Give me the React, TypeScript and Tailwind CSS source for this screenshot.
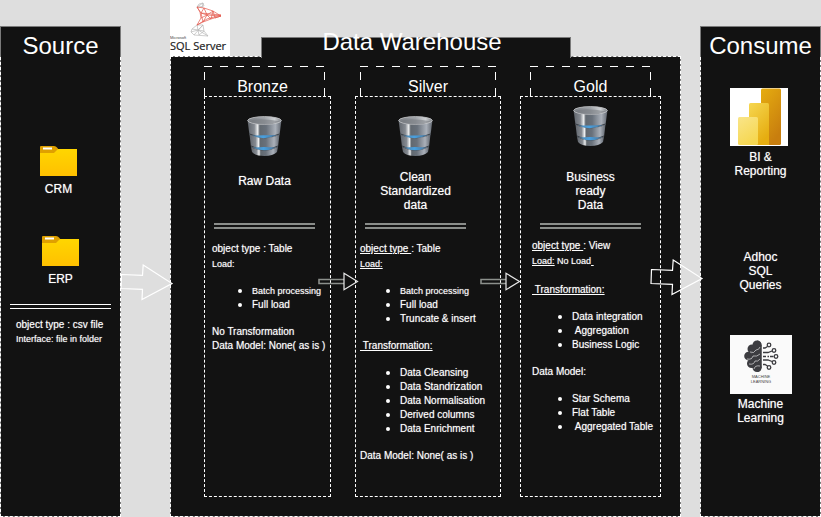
import { useId, type ReactNode } from "react";

const panelFill =
  "border-dashed border-white [background:linear-gradient(#121212,#121212)_padding-box,linear-gradient(#7a7a7a,#7a7a7a)_border-box]";

const longDashTab =
  "[background:repeating-linear-gradient(90deg,#fff_0_8px,transparent_8px_16px)_top/100%_1px_no-repeat,repeating-linear-gradient(0deg,#fff_0_8px,transparent_8px_16px)_left/1px_100%_no-repeat,repeating-linear-gradient(0deg,#fff_0_8px,transparent_8px_16px)_right/1px_100%_no-repeat]";

const strongText = "[text-shadow:0_0_1px_#ffffff99]";

function FolderIcon() {
  const id = useId();
  return (
    <svg viewBox="0 0 37 30" className="block h-[30px] w-[37px]" aria-hidden="true">
      <defs>
        <linearGradient id={id} x1="0" y1="0" x2="0" y2="1">
          <stop offset="0" stopColor="#ffd600" />
          <stop offset="1" stopColor="#ffc000" />
        </linearGradient>
      </defs>
      <path d="M0 1Q0 0 1 0H14Q16 0 17 1.500L19 4V7H0Z" fill="#dfa000" />
      <rect x="3" y="1.500" width="9" height="2" fill="#fff" />
      <path d="M0 7H14L18 3H37V30H0Z" fill={`url(#${id})`} />
    </svg>
  );
}

function DatabaseIcon() {
  const id = useId();
  const metal = `url(#${id}m)`;
  const glow = `url(#${id}b)`;
  return (
    <svg viewBox="0 0 35 40" className="block h-10 w-[35px]" aria-hidden="true">
      <defs>
        <linearGradient id={`${id}m`}>
          <stop offset="0" stopColor="#60656c" />
          <stop offset="0.2" stopColor="#858a91" />
          <stop offset="0.3" stopColor="#eceeef" />
          <stop offset="0.36" stopColor="#626970" />
          <stop offset="0.55" stopColor="#69717b" />
          <stop offset="0.82" stopColor="#aab0b9" />
          <stop offset="1" stopColor="#60666f" />
        </linearGradient>
        <linearGradient id={`${id}t`}>
          <stop offset="0" stopColor="#7d8186" />
          <stop offset="0.5" stopColor="#9ea2a7" />
          <stop offset="0.8" stopColor="#cdd0d3" />
          <stop offset="1" stopColor="#7c8085" />
        </linearGradient>
        <linearGradient id={`${id}b`}>
          <stop offset="0" stopColor="#5484a8" />
          <stop offset="0.45" stopColor="#48a0e0" />
          <stop offset="1" stopColor="#4c7396" />
        </linearGradient>
      </defs>
      <path d="M0.500 4L2.500 19Q17 26 32.500 19L34.500 4Z" fill={metal} />
      <path d="M2.500 18.500Q17 26 32.500 18.500L31 31Q17 38 4 31Z" fill={metal} />
      <path d="M4 31Q17 38 31 31L30 36Q26 40 17.500 40Q8 40 5 36Z" fill={metal} />
      <path d="M2.500 18Q17 24.500 32.500 18" fill="none" stroke="#30373e" strokeWidth="0.900" />
      <path d="M4 30Q17 37 31 30" fill="none" stroke="#30373e" strokeWidth="0.900" />
      <path d="M5 19.500Q17 19.500 30 19Q17 25 5 19.500Z" fill={glow} />
      <path d="M6 31.500Q17 30.500 29 31.500Q17 37 6 31.500Z" fill={glow} />
      <ellipse cx="17.500" cy="4.500" rx="16.800" ry="3.900" fill={`url(#${id}t)`} stroke="#c6c8ca" strokeWidth="0.800" />
      <path d="M2 5.500Q10 1 33 5.500Q25 9 17 8.400Q8 8.500 2 5.500Z" fill="#6f747a" opacity="0.5" />
    </svg>
  );
}

function SqlServerLogo() {
  return (
    <div className="h-14 w-[60px] bg-white">
      <svg viewBox="0 0 60 56" className="block h-14 w-[60px]" role="img" aria-label="Microsoft SQL Server">
        <g fill="none" stroke="#b9b9b9" strokeWidth="0.700">
          <path d="M27 7L29 4L33 3L34 6L29 7L27 7L33 3L32 8" />
          <path d="M27 25L22 29L21 32L24 35L38 36L34 31L33 25L27 25L28 30L38 36M22 29L28 30L33 25L24 35M21 32L28 30L34 31L29 35L28 30" />
        </g>
        <g fill="none" stroke="#e4574c" strokeWidth="0.700">
          <path d="M27 7L34 8L43 11L51 16L41 19L33 22L27 25L31 18L30 12Z" />
          <path d="M27 7L31 13L34 8L37 15L43 11L45 18L51 16L37 15L31 13L33 22L37 15L41 19L43 11M31 18L37 15M27 25L37 19L51 15L31 13" />
        </g>
        <text x="0" y="39" fontSize="4" fill="#444" fontFamily="Liberation Sans, sans-serif">Microsoft</text>
        <text x="0" y="50" fontSize="11" fill="#222" stroke="#222" strokeWidth="0.200" fontFamily="Open Sans, sans-serif">SQL Server</text>
      </svg>
    </div>
  );
}

function PowerBiIcon() {
  const id = useId();
  return (
    <svg viewBox="0 0 58 58" className="mr-[3px] block h-[58px] w-[58px] bg-white" role="img" aria-label="Power BI">
      <defs>
        <linearGradient id={`${id}a`} x1="0" y1="0" x2="0.5" y2="1">
          <stop offset="0" stopColor="#e6ad10" />
          <stop offset="1" stopColor="#c87e0e" />
        </linearGradient>
        <linearGradient id={`${id}b`} x1="0" y1="0" x2="0.5" y2="1">
          <stop offset="0" stopColor="#f6d751" />
          <stop offset="1" stopColor="#e6ad10" />
        </linearGradient>
        <linearGradient id={`${id}c`} x1="0" y1="0" x2="0.5" y2="1">
          <stop offset="0" stopColor="#f9e589" />
          <stop offset="1" stopColor="#f6d751" />
        </linearGradient>
      </defs>
      <rect x="31" y="0.500" width="20" height="56.500" rx="1.500" fill={`url(#${id}a)`} />
      <path d="M19 16.500Q19 15 20.500 15H37.500Q39 15 39 16.500V57H19Z" fill={`url(#${id}b)`} />
      <rect x="8" y="29" width="20" height="28" rx="1.500" fill={`url(#${id}c)`} />
    </svg>
  );
}

function MachineLearningIcon() {
  return (
    <svg viewBox="0 0 62 59" className="block h-[59px] w-[62px] bg-[#fafafa]" role="img" aria-label="Machine learning">
      <g fill="#3c3c40">
        <circle cx="27" cy="10" r="4.500" />
        <circle cx="22" cy="14" r="4.500" />
        <circle cx="18.500" cy="21" r="4.300" />
        <circle cx="21.500" cy="28.500" r="4.500" />
        <circle cx="27" cy="32.500" r="4.500" />
        <rect x="22" y="10" width="9.500" height="23" />
        <path d="M27 5.500Q31.500 6 31.500 10V33Q31 37 27 37Z" />
      </g>
      <g fill="none" stroke="#fafafa" strokeWidth="0.600">
        <path d="M20 17Q24 19 26 15Q29 15 30 12M17 24Q22 25 23 21Q27 22 30 19M19 29Q24 30 25 26Q28 27 30 24M24 34Q25 30 30 31" />
      </g>
      <g fill="none" stroke="#3c3c40" strokeWidth="1.300">
        <path d="M33 13H35L37.500 11.500M33 17.500H38L42 16M33 21.500H36M37.500 21.500H39M40 21.500H43.500M33 25H38L42 26.500M33 29.500H35L37.500 31" />
        <circle cx="39" cy="10" r="1.800" />
        <circle cx="44" cy="15.500" r="1.800" />
        <circle cx="46" cy="21.500" r="1.800" />
        <circle cx="44" cy="27.500" r="1.800" />
        <circle cx="39" cy="32.500" r="1.800" />
      </g>
      <g fontSize="4" fill="#444" textAnchor="middle" fontFamily="Liberation Sans, sans-serif">
        <text x="31" y="43">MACHINE</text>
        <text x="31" y="48">LEARNING</text>
      </g>
    </svg>
  );
}

function BigArrow({ className }: { className: string }) {
  return (
    <svg viewBox="0 0 53 37" className={`h-[37px] w-[53px] ${className}`} aria-hidden="true">
      <path d="M1.500 10.500L22.500 11.300L23.200 1L52 19.500L22 35.500L22.500 25.300L1 24.500Z" fill="none" stroke="#fff" strokeWidth="1.200" />
    </svg>
  );
}

function SmallArrow({ className }: { className: string }) {
  return (
    <svg viewBox="0 0 41 19" className={`h-[19px] w-[41px] ${className}`} aria-hidden="true">
      <path d="M26 7.500H1V11.500H26" fill="none" stroke="#8c908c" strokeWidth="1.600" />
      <path d="M26 1.200L39.500 9.500L26 17.800Z" fill="none" stroke="#e8e8e8" strokeWidth="1.200" />
    </svg>
  );
}

function SidePanel({ title, children }: { title: string; children: ReactNode }) {
  return (
    <section className="flex flex-col pt-[26px]">
      <h2 className="h-[31px] border border-b-0 border-[#7a7a7a] bg-[#121212] pt-[5px] text-center text-2xl leading-7">
        {title}
      </h2>
      <div className={`flex-1 border border-t-0 ${panelFill}`}>{children}</div>
    </section>
  );
}

function Label({ lines }: { lines: string[] }) {
  return (
    <div className={`text-center text-xs leading-[14px] ${strongText}`}>
      {lines.map((line) => (
        <div key={line}>{line}</div>
      ))}
    </div>
  );
}

function Item({ small, children }: { small?: boolean; children: ReactNode }) {
  return (
    <li className="h-[14px]">
      <span className={small ? "text-[9px]" : "text-[10px]"}>{children}</span>
    </li>
  );
}

function Items({ children }: { children: ReactNode }) {
  return <ul className="mt-3 mb-[14px] list-disc pl-10 text-xs leading-[14px]">{children}</ul>;
}

function Layer(props: {
  title: string;
  tab: string;
  head: string;
  iconTop: string;
  labelTop: string;
  lines: string[];
  body: string;
  children: ReactNode;
}) {
  return (
    <article className="flex flex-col">
      <h3 className={`h-[30px] pt-[11px] text-center text-base leading-5 ${longDashTab} ${props.tab}`}>{props.title}</h3>
      <div className="flex-1 border border-dashed border-white">
        <div className={`h-[132px] w-[101px] ${props.head}`}>
          <div className={`flex h-[60px] justify-center ${props.iconTop}`}>
            <DatabaseIcon />
          </div>
          <div className={`h-[66px] ${props.labelTop}`}>
            <Label lines={props.lines} />
          </div>
          <div className="h-[6px] border-y-2 border-[#8a8d8a]" />
        </div>
        <div className={`text-[10px] leading-[14px] ${strongText} ${props.body}`}>{props.children}</div>
      </div>
    </article>
  );
}

export default function App() {
  return (
    <main className="grid min-h-screen grid-cols-[121fr_49fr_511fr_19fr_121fr] overflow-hidden bg-[#dedede] font-['Liberation_Sans',Arial,sans-serif] whitespace-nowrap text-white">
      <SidePanel title="Source">
        <div className="flex flex-col items-center gap-1.5 pt-[89px] pr-1">
          <FolderIcon />
          <Label lines={["CRM"]} />
        </div>
        <div className="flex flex-col items-center gap-1.5 pt-10">
          <FolderIcon />
          <Label lines={["ERP"]} />
        </div>
        <div className="mt-[18px] mr-[9px] ml-[9px] h-[5px] border-y border-white" />
        <div className={`mt-2 pl-[15px] text-[10px] leading-[15px] ${strongText}`}>
          <p>object type : csv file</p>
          <p className="text-[9px]">Interface: file in folder</p>
        </div>
      </SidePanel>

      <div className="relative z-10">
        <BigArrow className="absolute top-[264px] -right-[3px]" />
      </div>

      <section className="relative flex flex-col">
        <div className="grid h-[57px] grid-cols-[91fr_310fr_110fr] items-end">
          <div className="h-full">
            <SqlServerLogo />
          </div>
          <h2 className="relative z-10 -mb-px flex h-[21px] items-center justify-center border border-b-0 border-[#7a7a7a] bg-[#121212] pr-2 pb-[13px] text-2xl leading-7">
            Data Warehouse
          </h2>
        </div>
        <div
          className={`-mt-px grid flex-1 grid-cols-[33fr_127fr_24fr_146fr_19fr_141fr_19fr] border pt-[9px] pb-[19px] ${panelFill}`}
        >
          <div />
          <Layer
            title="Bronze"
            tab="mr-[6px] pr-1"
            head="ml-[9px]"
            iconTop="pt-[19px]"
            labelTop="pt-[17px]"
            lines={["Raw Data"]}
            body="pt-[13px] pl-[7px]"
          >
            <p>object type : Table</p>
            <p className="mt-px text-[9px]">Load:</p>
            <Items>
              <Item small>Batch processing</Item>
              <Item>Full load</Item>
            </Items>
            <p>No Transformation</p>
            <p>Data Model: None( as is )</p>
          </Layer>
          <div className="relative">
            <SmallArrow className="absolute top-[206px] -right-[4px]" />
          </div>
          <Layer
            title="Silver"
            tab="ml-[5px] mr-[5px]"
            head="ml-[9px]"
            iconTop="pt-[19px]"
            labelTop="pt-[13px]"
            lines={["Clean", "Standardized", "data"]}
            body="pt-[13px] pl-[4px]"
          >
            <p>
              <u>object type&nbsp;</u>: Table
            </p>
            <p className="mt-px text-[9px]">
              <u>Load:</u>
            </p>
            <Items>
              <Item small>Batch processing</Item>
              <Item>Full load</Item>
              <Item>Truncate &amp; insert</Item>
            </Items>
            <p>
              <u>&nbsp;Transformation:</u>
            </p>
            <Items>
              <Item>Data Cleansing</Item>
              <Item>Data Standrization</Item>
              <Item>Data Normalisation</Item>
              <Item>Derived columns</Item>
              <Item>Data Enrichment</Item>
            </Items>
            <p>Data Model: None( as is )</p>
          </Layer>
          <div className="relative">
            <SmallArrow className="absolute top-[206px] -right-[1px]" />
          </div>
          <Layer
            title="Gold"
            tab="ml-[10px] mr-[10px]"
            head="ml-[19px]"
            iconTop="pt-[9px]"
            labelTop="pt-[13px]"
            lines={["Business", "ready", "Data"]}
            body="pt-[10px] pl-[11px]"
          >
            <p>
              <u>object type&nbsp;</u>: View
            </p>
            <p className="mt-px text-[9px]">
              <u>Load:</u> No Load<u>&nbsp;</u>
            </p>
            <p className="mt-[15px]">
              <u>&nbsp;Transformation:</u>
            </p>
            <Items>
              <Item>Data integration</Item>
              <Item>&nbsp;Aggregation</Item>
              <Item>Business Logic</Item>
            </Items>
            <p>Data Model:</p>
            <Items>
              <Item>Star Schema</Item>
              <Item>Flat Table</Item>
              <Item>&nbsp;Aggregated Table</Item>
            </Items>
          </Layer>
        </div>
      </section>

      <div className="relative z-10">
        <BigArrow className="absolute top-[259px] -right-[3px]" />
      </div>

      <SidePanel title="Consume">
        <div className="flex flex-col items-center gap-1 pt-[31px]">
          <PowerBiIcon />
          <Label lines={["BI &", "Reporting"]} />
        </div>
        <div className="pt-[72px]">
          <Label lines={["Adhoc", "SQL", "Queries"]} />
        </div>
        <div className="flex flex-col items-center gap-[3px] pt-[43px]">
          <MachineLearningIcon />
          <Label lines={["Machine", "Learning"]} />
        </div>
      </SidePanel>
    </main>
  );
}
